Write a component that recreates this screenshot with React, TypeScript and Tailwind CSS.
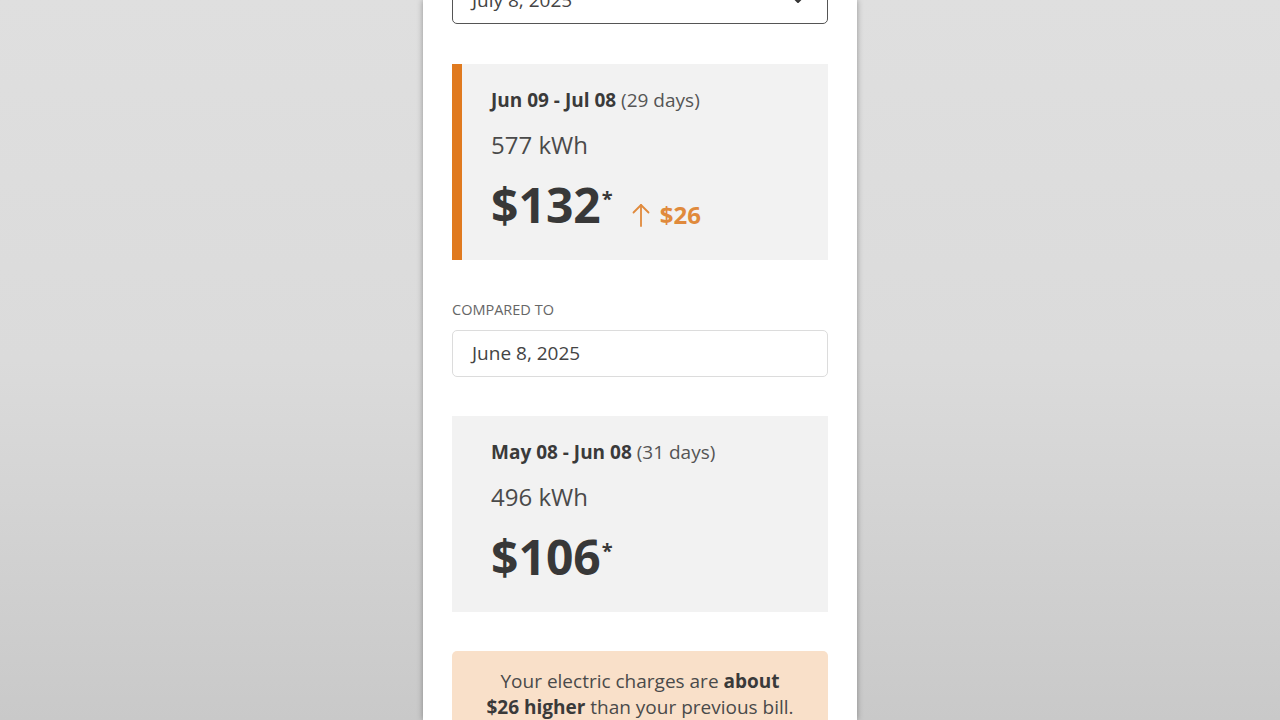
import React from "react";
import { ChevronDown } from "lucide-react";

interface Period {
  range: string;
  days: number;
  kwh: number;
  amount: number;
  delta?: number;
}

const current: Period = { range: "Jun 09 - Jul 08", days: 29, kwh: 577, amount: 132, delta: 26 };
const previous: Period = { range: "May 08 - Jun 08", days: 31, kwh: 496, amount: 106 };

function UpArrow() {
  return (
    <svg width="18" height="24" viewBox="0 0 18 24" fill="none" stroke="#e08a3c" strokeWidth="1.8" strokeLinecap="round" strokeLinejoin="round">
      <path d="M9 23V2" />
      <path d="M1.5 9.5L9 2l7.5 7.5" />
    </svg>
  );
}

function BillCard({ period, highlight }: { period: Period; highlight?: boolean }) {
  return (
    <div className="flex bg-[#f2f2f2]">
      <div className={highlight ? "w-[10px] bg-[#e07a1f]" : "w-[10px]"} />
      <div className="pl-[29px] pt-6 pb-[31px]">
        <div className="text-[19px] leading-6 text-[#555]">
          <span className="font-bold text-[#3a3a3a]">{period.range}</span> ({period.days} days)
        </div>
        <div className="mt-[17px] text-[24px] leading-8 text-[#4a4a4a]">{period.kwh} kWh</div>
        <div className="mt-5 flex h-12 items-start">
          <span className="text-[48px] leading-[48px] font-bold text-[#383838]">${period.amount}</span>
          <span className="mt-[8px] ml-[1px] text-[20px] leading-5 font-bold text-[#383838]">*</span>
          {period.delta !== undefined && (
            <span className="ml-[19px] mt-[22px] flex items-start">
              <UpArrow />
              <span className="ml-[10px] -mt-[4px] text-[24px] leading-8 font-bold text-[#e08a3c]">${period.delta}</span>
            </span>
          )}
        </div>
      </div>
    </div>
  );
}

export default function App() {
  return (
    <div
      className="h-[720px] w-full overflow-hidden bg-gradient-to-b from-[#dfdfdf] via-[#dbdbdb] to-[#c9c9c9]"
      style={{ fontFamily: '"Open Sans", "Noto Sans", sans-serif' }}
    >
      <div className="mx-auto h-[720px] w-[434px] overflow-hidden bg-white px-[29px] shadow-[0_0_6px_rgba(0,0,0,0.35)]">
        {/* bill date select */}
        <div className="-mt-6 flex h-12 items-center justify-between rounded-[5px] border border-[#555] pl-[19px] pr-[21px]">
          <span className="text-[19px] text-[#444]">July 8, 2025</span>
          <ChevronDown size={16} strokeWidth={3} color="#333" />
        </div>

        <div className="mt-10">
          <BillCard period={current} highlight />
        </div>

        <div className="mt-[40px] text-[14.5px] leading-5 uppercase text-[#666]">Compared to</div>
        <div className="mt-[10px] flex h-[47px] items-center rounded-[5px] border border-[#dcdcdc] px-[19px]">
          <span className="text-[19px] text-[#444]">June 8, 2025</span>
        </div>

        <div className="mt-[39px]">
          <BillCard period={previous} />
        </div>

        <div className="mt-[39px] rounded-[5px] bg-[#f9e0c9] px-6 pt-[17px] pb-5 text-center text-[19px] leading-[26px] text-[#4a4a4a]">
          Your electric charges are <span className="font-bold text-[#3a3a3a]">about</span>
          <br />
          <span className="font-bold text-[#3a3a3a]">${current.delta} higher</span> than your previous bill.
        </div>
      </div>
    </div>
  );
}
